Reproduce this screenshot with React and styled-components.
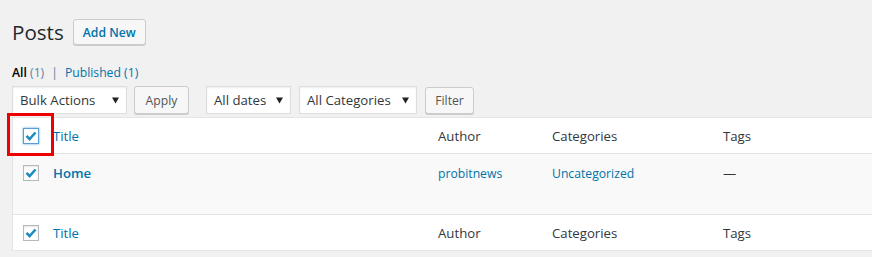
import React from "react";
import styled, { createGlobalStyle } from "styled-components";

const GlobalStyle = createGlobalStyle`
  html, body {
    margin: 0;
    padding: 0;
    background: #f1f1f1;
    overflow: hidden;
  }
  body {
    font-family: "Open Sans", "Noto Sans", sans-serif;
    font-size: 12.2px;
    color: #444;
  }
`;

const Wrap = styled.div`
  padding: 0 0 0 12px;
`;

const HeadLine = styled.div`
  display: flex;
  align-items: center;
  gap: 9px;
  padding-top: 19px;
  height: 26px;
`;

const Heading = styled.h1`
  margin: 0;
  font-size: 20.6px;
  font-weight: 400;
  color: #23282d;
  line-height: 26px;
`;

const Button = styled.button`
  display: inline-flex;
  align-items: center;
  justify-content: center;
  box-sizing: border-box;
  width: ${(p) => p.$w}px;
  height: ${(p) => p.$h || 28}px;
  padding: 0;
  margin: 0;
  font-family: inherit;
  font-size: 12.2px;
  font-weight: ${(p) => (p.$primary ? 600 : 400)};
  color: ${(p) => (p.$primary ? "#0073aa" : "#555")};
  background: #f7f7f7;
  border: 1px solid #ccc;
  border-radius: 3px;
  box-shadow: 0 1px 0 #ccc;
  cursor: pointer;
`;

const SubNav = styled.ul`
  display: flex;
  list-style: none;
  margin: 0;
  padding: 0;
  height: 20px;
  margin-top: 17px;
  align-items: center;
  font-size: 12.2px;
`;

const NavItem = styled.li`
  color: ${(p) => (p.$current ? "#000" : "#0073aa")};
  font-weight: ${(p) => (p.$current ? 600 : 400)};
`;

const Count = styled.span`
  color: ${(p) => (p.$muted ? "#62809f" : "#0073aa")};
  font-weight: 400;
`;

const Sep = styled.span`
  color: #62809f;
  margin: 0 7px 0 7px;
`;

const Toolbar = styled.div`
  display: flex;
  align-items: center;
  margin-top: 4px;
  height: 28px;
`;

const Group = styled.div`
  display: flex;
  align-items: center;
  gap: ${(p) => p.$gap || 7}px;
  margin-right: ${(p) => p.$mr || 0}px;
`;

const Select = styled.div`
  box-sizing: border-box;
  width: ${(p) => p.$w}px;
  height: 28px;
  display: flex;
  align-items: center;
  justify-content: space-between;
  padding: 0 7px 0 7px;
  background: #fff;
  border: 1px solid #ddd;
  box-shadow: inset 0 1px 2px rgba(0, 0, 0, 0.07);
  font-size: 13.2px;
  color: #32373c;
`;

const TableBox = styled.div`
  position: relative;
  margin-top: 3px;
  background: #fff;
  border: 1px solid #e5e5e5;
  border-right: none;
  box-shadow: 0 1px 1px rgba(0, 0, 0, 0.04);
`;

const Row = styled.div`
  display: grid;
  grid-template-columns: 32px 385px 114px 171px 1fr;
  align-items: ${(p) => (p.$body ? "start" : "center")};
  height: ${(p) => p.$h}px;
  background: ${(p) => (p.$body ? "#f9f9f9" : "#fff")};
  border-bottom: ${(p) => (p.$line ? "1px solid #e1e1e1" : "none")};
  border-top: ${(p) => (p.$lineTop ? "1px solid #e1e1e1" : "none")};
  padding-top: ${(p) => (p.$body ? 10 : 1)}px;
  box-sizing: border-box;
`;

const Cell = styled.div`
  padding-left: 8px;
  color: ${(p) => (p.$link ? "#0073aa" : "#32373c")};
  font-size: ${(p) => p.$fs || 13.2}px;
  font-weight: ${(p) => (p.$bold ? 600 : 400)};
  line-height: 19px;
`;

const CheckCell = styled.div`
  padding-left: 10px;
  display: flex;
  align-items: center;
  padding-top: ${(p) => p.$pt || 0}px;
`;

const Box = styled.span`
  box-sizing: border-box;
  width: 16px;
  height: 16px;
  display: inline-flex;
  align-items: center;
  justify-content: center;
  background: #fff;
  border: 1px solid ${(p) => (p.$focus ? "#5b9dd9" : "#b4b9be")};
  box-shadow: ${(p) =>
    p.$focus ? "0 0 2px rgba(30,140,190,0.8)" : "inset 0 1px 2px rgba(0,0,0,0.1)"};
`;

const Highlight = styled.div`
  position: absolute;
  left: -6px;
  top: -5px;
  width: 47px;
  height: 43px;
  box-sizing: border-box;
  border: 3px solid #ee0000;
  pointer-events: none;
`;

const Arrow = () => (
  <svg width="7" height="7" viewBox="0 0 7 7">
    <path d="M0 0.5 H7 L3.5 6.5 Z" fill="#222" />
  </svg>
);

const Check = ({ focus, pt }) => (
  <CheckCell $pt={pt}>
    <Box $focus={focus}>
      <svg width="12" height="10" viewBox="0 0 12 10">
        <path d="M1.5 4.8 L4.6 8 L10.5 1.5" fill="none" stroke="#1e8cbe" strokeWidth="2.6" />
      </svg>
    </Box>
  </CheckCell>
);

const HeaderRow = ({ focus, ...rest }) => (
  <Row {...rest}>
    <Check focus={focus} />
    <Cell $link>Title</Cell>
    <Cell>Author</Cell>
    <Cell>Categories</Cell>
    <Cell>Tags</Cell>
  </Row>
);

export default function App() {
  return (
    <>
      <GlobalStyle />
      <Wrap>
        <HeadLine>
          <Heading>Posts</Heading>
          <Button $primary $h={26} $w={73}>Add New</Button>
        </HeadLine>
        <SubNav>
          <NavItem $current>
            All <Count $muted>(1)</Count>
          </NavItem>
          <Sep>|</Sep>
          <NavItem>
            Published <Count>(1)</Count>
          </NavItem>
        </SubNav>
        <Toolbar>
          <Group $mr={17}>
            <Select $w={115}>
              Bulk Actions <Arrow />
            </Select>
            <Button $w={55}>Apply</Button>
          </Group>
          <Group $gap={8}>
            <Select $w={85}>
              All dates <Arrow />
            </Select>
            <Select $w={118}>
              All Categories <Arrow />
            </Select>
            <Button $h={27} $w={49}>Filter</Button>
          </Group>
        </Toolbar>
        <TableBox>
          <HeaderRow focus $h={36} $line />
          <Row $body $h={60}>
            <Check pt={1} />
            <Cell $link $bold>Home</Cell>
            <Cell $link $fs={12.2}>probitnews</Cell>
            <Cell $link $fs={12.2}>Uncategorized</Cell>
            <Cell>—</Cell>
          </Row>
          <HeaderRow $h={36} $lineTop />
          <Highlight />
        </TableBox>
      </Wrap>
    </>
  );
}
